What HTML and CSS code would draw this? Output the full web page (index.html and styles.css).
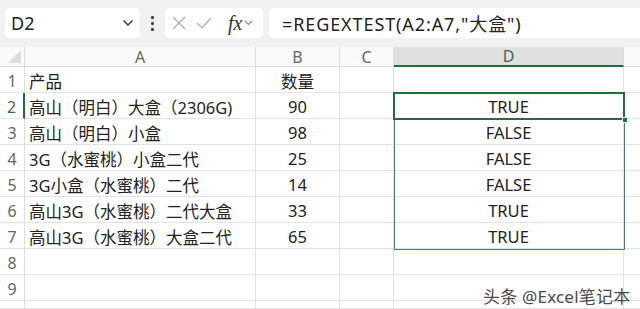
FILE: index.html
```html
<!DOCTYPE html>
<html lang="zh-CN">
<head>
    <meta charset="UTF-8">
    <meta name="viewport" content="width=device-width, initial-scale=1.0">
    <title>REGEXTEST</title>
    <link rel="stylesheet" href="styles.css">
</head>
<body>
    <div class="toolbar">
        <div class="name-box">
            <span>D2</span>
            <svg class="chev" width="12" height="8" viewBox="0 0 12 8"><path d="M1.5 1.5 L6 6 L10.5 1.5" fill="none" stroke="#333" stroke-width="1.4"/></svg>
        </div>
        <div class="dots"><i></i><i></i><i></i></div>
        <div class="fx-box">
            <svg width="14" height="14" viewBox="0 0 14 14"><path d="M1 1 L13 13 M13 1 L1 13" stroke="#aaa" stroke-width="1.2"/></svg>
            <svg width="16" height="14" viewBox="0 0 16 14"><path d="M1 7 L6 12 L15 2" fill="none" stroke="#aaa" stroke-width="1.2"/></svg>
            <span class="fx">fx</span>
            <svg width="9" height="6" viewBox="0 0 9 6"><path d="M1 1 L4.5 4.5 L8 1" fill="none" stroke="#888" stroke-width="1.1"/></svg>
        </div>
        <div class="formula">=REGEXTEST(A2:A7,"大盒")</div>
    </div>

    <div class="sheet">
        <div class="corner"><span class="tri"></span></div>
        <div class="col-head">A</div>
        <div class="col-head">B</div>
        <div class="col-head">C</div>
        <div class="col-head active">D</div>
        <div class="col-head last"></div>

        <div class="row-head">1</div>
        <div class="cell">产品</div>
        <div class="cell mid">数量</div>
        <div class="cell"></div>
        <div class="cell"></div>
        <div class="cell last"></div>

        <div class="row-head active">2</div>
        <div class="cell">高山（明白）大盒（2306G)</div>
        <div class="cell mid">90</div>
        <div class="cell"></div>
        <div class="cell mid">TRUE</div>
        <div class="cell last"></div>

        <div class="row-head">3</div>
        <div class="cell">高山（明白）小盒</div>
        <div class="cell mid">98</div>
        <div class="cell"></div>
        <div class="cell mid">FALSE</div>
        <div class="cell last"></div>

        <div class="row-head">4</div>
        <div class="cell">3G（水蜜桃）小盒二代</div>
        <div class="cell mid">25</div>
        <div class="cell"></div>
        <div class="cell mid">FALSE</div>
        <div class="cell last"></div>

        <div class="row-head">5</div>
        <div class="cell">3G小盒（水蜜桃）二代</div>
        <div class="cell mid">14</div>
        <div class="cell"></div>
        <div class="cell mid">FALSE</div>
        <div class="cell last"></div>

        <div class="row-head">6</div>
        <div class="cell">高山3G（水蜜桃）二代大盒</div>
        <div class="cell mid">33</div>
        <div class="cell"></div>
        <div class="cell mid">TRUE</div>
        <div class="cell last"></div>

        <div class="row-head">7</div>
        <div class="cell">高山3G（水蜜桃）大盒二代</div>
        <div class="cell mid">65</div>
        <div class="cell"></div>
        <div class="cell mid">TRUE</div>
        <div class="cell last"></div>

        <div class="row-head">8</div>
        <div class="cell"></div>
        <div class="cell"></div>
        <div class="cell"></div>
        <div class="cell"></div>
        <div class="cell last"></div>

        <div class="row-head">9</div>
        <div class="cell"></div>
        <div class="cell"></div>
        <div class="cell"></div>
        <div class="cell"></div>
        <div class="cell last"></div>

        <div class="row-head"></div>
        <div class="cell"></div>
        <div class="cell"></div>
        <div class="cell"></div>
        <div class="cell"></div>
        <div class="cell last"></div>

        <!-- spill range and active cell -->
        <div class="spill"></div>
        <div class="active-cell"><span class="handle"></span></div>
        <div class="watermark">头条 @Excel笔记本</div>
    </div>
</body>
</html>
```

FILE: styles.css
```css
* {
    box-sizing: border-box;
}

body {
    margin: 0;
    width: 640px;
    height: 309px;
    overflow: hidden;
    background: #fff;
    font-family: "Noto Sans", "Noto Sans CJK SC", sans-serif;
    color: #222;
}

.toolbar {
    height: 47px;
    background: #f1f1f1;
    display: flex;
    align-items: center;
    padding: 0 0 1px 5px;
}

.name-box {
    width: 135px;
    height: 30px;
    background: #fff;
    border-radius: 5px;
    display: flex;
    align-items: center;
    justify-content: space-between;
    padding: 0 6px 0 6px;
    font-size: 18px;
    color: #222;
}

.dots {
    width: 25px;
    display: flex;
    flex-direction: column;
    align-items: center;
    gap: 3px;
}

.dots i {
    width: 3px;
    height: 3px;
    background: #444;
    border-radius: 1px;
}

.fx-box {
    width: 98px;
    height: 30px;
    background: #fff;
    border-radius: 5px;
    display: flex;
    align-items: center;
    padding: 0 5px 0 7px;
    gap: 10px;
}

.fx {
    font-family: "Liberation Serif", serif;
    font-style: italic;
    font-size: 20px;
    color: #333;
    margin-left: 6px;
    margin-right: -8px;
}

.formula {
    flex: 1;
    height: 30px;
    margin-left: 6px;
    background: #fff;
    border-radius: 5px 0 0 5px;
    display: flex;
    align-items: center;
    padding-left: 13px;
    font-size: 18px;
    letter-spacing: 0.9px;
    color: #222;
}

.sheet {
    position: relative;
    display: grid;
    grid-template-columns: 25px 231px 84px 54px 230px 16px;
    grid-template-rows: 20px repeat(9, 26px) 8px;
    font-size: 16.5px;
}

.corner {
    background: #fafafa;
    border-right: 1px solid #ddd;
    border-bottom: 1px solid #ddd;
    position: relative;
}

.tri {
    position: absolute;
    right: 3px;
    bottom: 3px;
    width: 0;
    height: 0;
    border-left: 13px solid transparent;
    border-bottom: 13px solid #dcdcdc;
}

.col-head {
    background: #fafafa;
    border-right: 1px solid #ddd;
    border-bottom: 1px solid #ddd;
    display: flex;
    align-items: center;
    justify-content: center;
    color: #666;
    font-size: 16px;
}

.col-head.active {
    background: #e0e0e0;
    color: #3b6b52;
    border-bottom: 2px solid #1e6e42;
}

.row-head {
    border-right: 1px solid #ddd;
    border-bottom: 1px solid #e3e3e3;
    display: flex;
    align-items: center;
    justify-content: center;
    padding-top: 2px;
    color: #666;
    font-size: 16px;
}

.row-head.active {
    border-right: 2px solid #1e6e42;
    color: #3b6b52;
}

.cell {
    border-right: 1px solid #e3e3e3;
    border-bottom: 1px solid #e3e3e3;
    display: flex;
    align-items: center;
    padding: 2px 0 0 4px;
    white-space: nowrap;
    overflow: hidden;
}

.cell.mid {
    justify-content: center;
    padding-left: 0;
}

.cell.last,
.col-head.last {
    border-right: none;
}

.spill {
    position: absolute;
    left: 394px;
    top: 46px;
    width: 231px;
    height: 157px;
    border: 1px solid #4f6f9a;
}

.active-cell {
    position: absolute;
    left: 393px;
    top: 45px;
    width: 232px;
    height: 28px;
    border: 2px solid #1e6e42;
}

.handle {
    position: absolute;
    right: -5px;
    bottom: -5px;
    width: 6px;
    height: 6px;
    background: #1e6e42;
    border: 1px solid #fff;
}

.watermark {
    position: absolute;
    left: 483px;
    top: 241px;
    font-size: 17px;
    line-height: 17px;
    color: #4a4a4a;
    letter-spacing: 0.2px;
}
```
